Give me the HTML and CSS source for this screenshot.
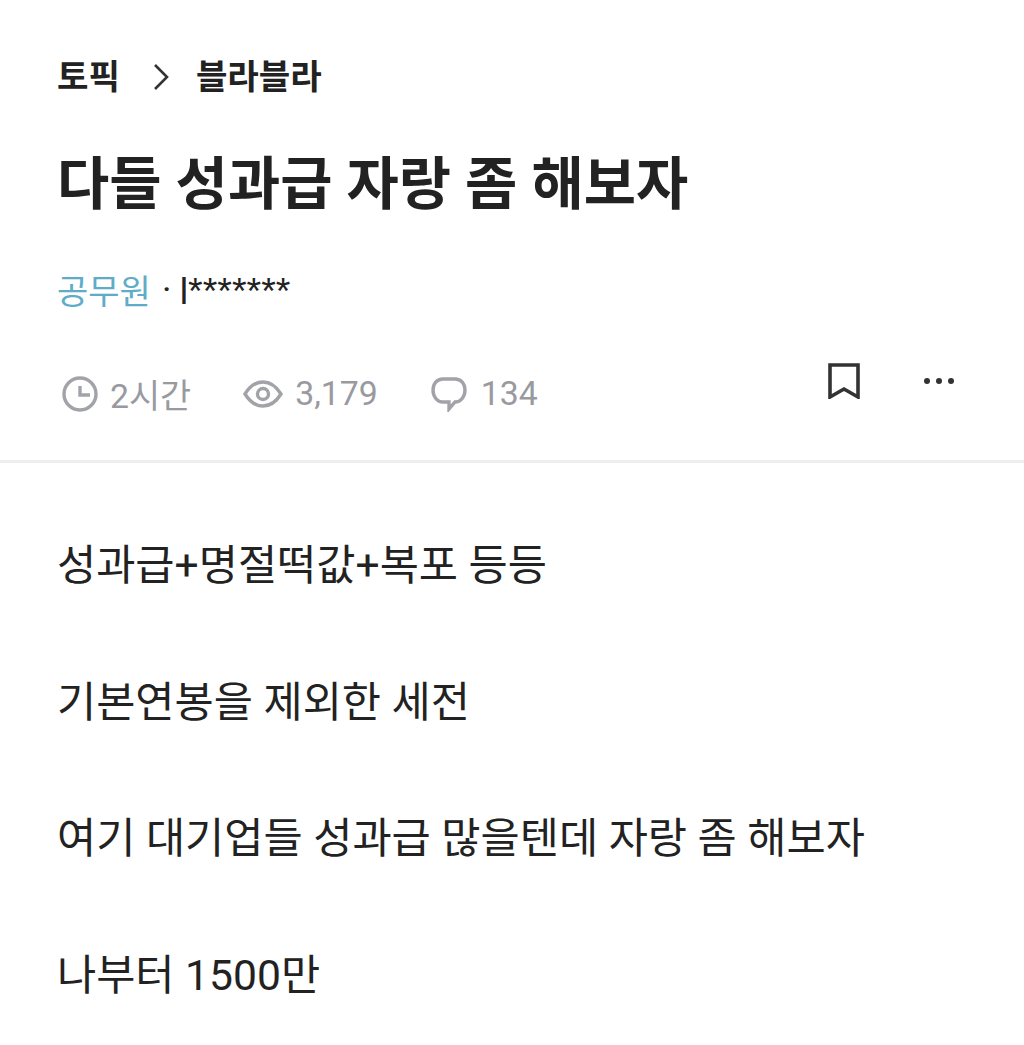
FILE: index.html
```html
<!DOCTYPE html>
<html lang="ko">
<head>
  <meta charset="UTF-8" />
  <meta name="viewport" content="width=device-width, initial-scale=1" />
  <title>다들 성과급 자랑 좀 해보자</title>
  <link rel="stylesheet" href="styles.css">
</head>
<body>
  <header class="post-head">
    <nav class="crumbs">
      <span>토픽</span>
      <svg class="crumb-arrow" viewBox="0 0 18 30" width="18" height="30"><path d="M3 3l12 12L3 27" /></svg>
      <span>블라블라</span>
    </nav>

    <h1 class="title">다들 성과급 자랑 좀 해보자</h1>

    <div class="author">
      <span class="company">공무원</span>
      <span class="dot">·</span>
      <span class="nick">l*******</span>
    </div>

    <div class="meta-row">
      <div class="stats">
        <span class="stat">
          <svg class="stat-icon" viewBox="0 0 36 36" width="36" height="36"><circle cx="18" cy="18" r="16" /><path d="M18 10v9h10" /></svg>
          2시간
        </span>
        <span class="stat">
          <svg class="stat-icon eye" viewBox="0 0 40 30" width="40" height="30"><path d="M2 15C7 7 13 3 20 3s13 4 18 12c-5 8-11 12-18 12S7 23 2 15z" /><circle cx="20" cy="15" r="5.5" /></svg>
          3,179
        </span>
        <span class="stat comments">
          <svg class="stat-icon bubble" viewBox="0 0 36 36" width="36" height="36"><path d="M12 3h12c6 0 10 4.500 10 11s-4 12-10 12l-6 7v-7h-6C6 26 2 20.500 2 14S6 3 12 3z" /></svg>
          134
        </span>
      </div>
      <div class="actions">
        <svg class="bookmark" viewBox="0 0 32 36" width="32" height="36"><path d="M2 2h28v32L16 26 2 34z" /></svg>
        <svg class="more" viewBox="0 0 32 8" width="32" height="8"><circle cx="4" cy="4" r="3" /><circle cx="16" cy="4" r="3" /><circle cx="28" cy="4" r="3" /></svg>
      </div>
    </div>
  </header>

  <main class="post-body">
    <p>성과급+명절떡값+복포 등등</p>
    <p>기본연봉을 제외한 세전</p>
    <p>여기 대기업들 성과급 많을텐데 자랑 좀 해보자</p>
    <p>나부터 1500만</p>
  </main>
</body>
</html>
```

FILE: styles.css
```css
body {
  margin: 0;
  background: #fff;
  color: #222;
  font-family: Roboto, "Noto Sans CJK KR", sans-serif;
}

.post-head {
  padding: 54px 69px 0 57px;
  border-bottom: 3px solid #eeeeee;
  height: 406px;
}

.crumbs {
  display: flex;
  align-items: center;
  gap: 24px;
  height: 46px;
  font-size: 34.2px;
  font-weight: 700;
  line-height: 46px;
}

.crumb-arrow {
  margin-left: 8px;
  margin-right: 2px;
}

.crumb-arrow path {
  fill: none;
  stroke: #333;
  stroke-width: 2.6;
}

.title {
  margin: 49px 0 0;
  font-size: 56.8px;
  line-height: 72px;
  font-weight: 700;
}

.author {
  display: flex;
  align-items: center;
  margin-top: 46px;
  height: 44px;
  font-size: 34px;
}

.company {
  color: #5eacc8;
}

.dot {
  margin: 0 9px 0 12px;
  font-size: 26px;
  font-weight: 700;
}

.nick {
  padding-top: 5px;
  color: #222;
  font-family: "Liberation Sans", sans-serif;
  font-size: 37.6px;
}

.meta-row {
  display: flex;
  justify-content: space-between;
  margin-top: 44px;
}

.stats {
  display: flex;
  gap: 52px;
  padding: 14px 0 0 5px;
  color: #999aa0;
  font-size: 33.8px;
}

.stat {
  display: flex;
  align-items: center;
  gap: 12px;
}

.comments {
  gap: 14px;
  margin-left: 1px;
}

.stat-icon {
  fill: none;
  stroke: #a2a3a8;
  stroke-width: 3.4;
}

.actions {
  display: flex;
  align-items: center;
  gap: 63px;
  height: 40px;
  margin-top: 6px;
}

.bookmark {
  fill: none;
  stroke: #333;
  stroke-width: 3.6;
}

.more {
  fill: #333;
  stroke: none;
}

.post-body {
  padding: 0 57px;
}

.post-body p {
  margin: 0 0 88.7px;
  font-size: 42.6px;
  line-height: 48px;
}

.post-body p:first-child {
  margin-top: 78px;
}
```
